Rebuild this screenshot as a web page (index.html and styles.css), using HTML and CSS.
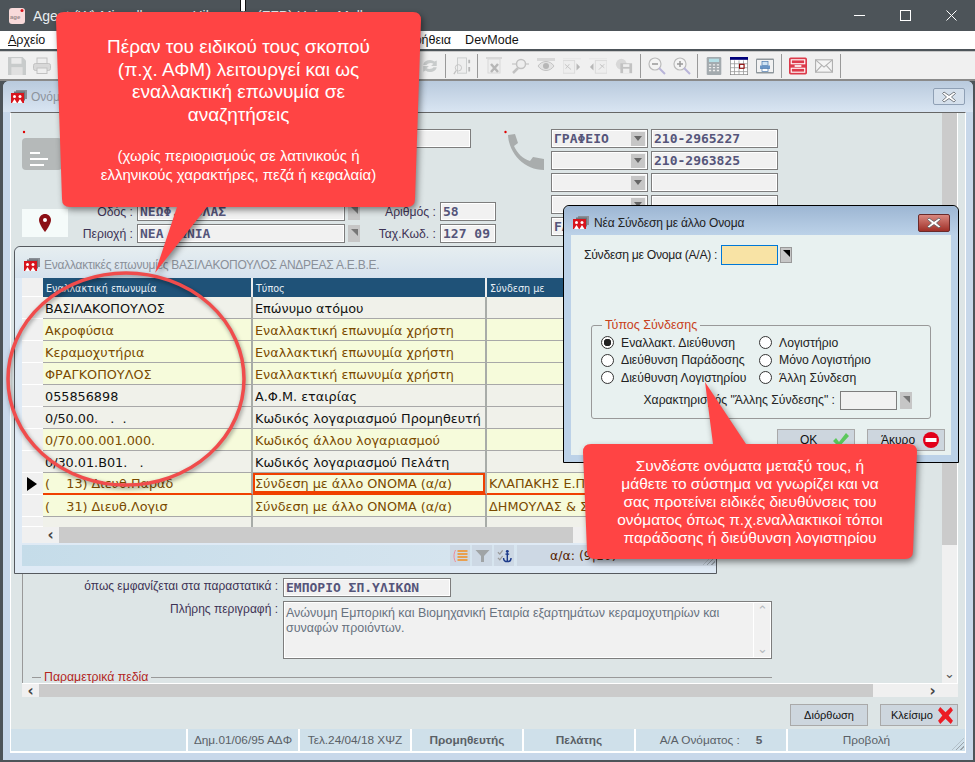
FILE: index.html
```html
<!DOCTYPE html>
<html lang="el">
	<head>
		<meta charset="utf-8">
		<title>Agent</title>
		<link rel="stylesheet" href="styles.css">
	</head>
	<body>
		<svg class="defs" width="0" height="0">
			<symbol id="winicon" viewBox="0 0 16 14">
				<rect x="5" y="0" width="11" height="9" fill="#8a8f96"/>
				<rect x="3" y="1.5" width="11" height="9" fill="#6f747a"/>
				<rect x="0" y="3" width="13" height="10" fill="#d8141c"/>
				<circle cx="3.5" cy="6.5" r="1.5" fill="#fff"/>
				<circle cx="9" cy="6.5" r="1.5" fill="#fff"/>
				<path d="M1 13 3.5 9 6 13zM6.5 13 9 9l2.5 4z" fill="#fff"/>
			</symbol>
			<symbol id="closex" viewBox="0 0 14 12">
				<path d="M2 1 7 4.5 12 1l1.5 1.5L9.5 6l4 3.5L12 11 7 7.500 2 11 .5 9.500l4-3.500-4-3.500z" fill="#fff" stroke="#5a5f66" stroke-width=".8"/>
			</symbol>
		</svg>

		<div class="app">
			<div class="titlebar">
				<svg class="appicon" viewBox="0 0 16 16">
					<rect width="16" height="16" rx="3" fill="#f8dada"/>
					<text x="1" y="11" font-size="6" font-weight="bold" font-family="Liberation Sans" fill="#9a8a8a">age</text>
					<circle cx="13" cy="2.500" r="1.500" fill="#d8141c"/>
				</svg>
				<span class="apptitle">Agent (W) Miscellaneous Hibernate (FFP) Heine Muller</span>
				<div class="winctl">
					<svg viewBox="0 0 11 11" class="ctl-min"><path d="M0 5.500h11" stroke="#fff"/></svg>
					<svg viewBox="0 0 11 11" class="ctl-max"><rect x=".5" y=".5" width="10" height="10" fill="none" stroke="#fff"/></svg>
					<svg viewBox="0 0 11 11" class="ctl-close"><path d="M.5.5l10 10M10.500.5l-10 10" stroke="#fff"/></svg>
				</div>
			</div>
			<div class="menubar">
				<span class="menu"><u>Α</u>ρχείο</span>
				<span class="menu-gap"></span>
				<span class="menu">Βοήθεια</span>
				<span class="menu">DevMode</span>
			</div>
			<div class="toolbar">
				<span class="tb tb25 tb-off"><svg viewBox="0 0 16 16"><path d="M0 0h13l3 3v13H0z" fill="#b4b8b8"/><rect x="3" y="1" width="9" height="5" fill="#e8e8e8"/><rect x="3" y="9" width="10" height="7" fill="#d8d8d8"/></svg></span>
				<span class="tb tb25 tb-off"><svg viewBox="0 0 18 16"><rect x="4" y="0" width="10" height="6" fill="#eee" stroke="#aaa"/><rect x=".5" y="5.500" width="17" height="7" rx="2" fill="#ccc" stroke="#aaa"/><rect x="4" y="10" width="10" height="5.500" fill="#eee" stroke="#aaa"/></svg></span>
				<span class="tb-hidden"></span>
				<span class="tb tb25 tb-off"><svg viewBox="0 0 16 16"><path d="M2 7a6 5 0 0 1 10-3l2-1v5H9l2-2a4 3 0 0 0-6 1zM14 9a6 5 0 0 1-10 3l-2 1V8h5l-2 2a4 3 0 0 0 6-1z" fill="#b4b8b8"/></svg></span>
				<span class="tb-sep"></span>
				<span class="tb tb25 tb-off"><svg viewBox="0 0 20 20"><rect x="5" y="1" width="10" height="17" fill="#eee" stroke="#b4b8b8"/><circle cx="6" cy="12" r="3.500" fill="none" stroke="#aaa"/><path d="M3.500 15 1 19" stroke="#aaa" stroke-width="1.500"/><path d="M18 3v4M18 11v5" stroke="#999" stroke-width="2"/></svg></span>
				<span class="tb-sep"></span>
				<span class="tb tb-off"><svg viewBox="0 0 18 18"><rect x="3" y="2" width="12" height="14" fill="#eee" stroke="#ccc"/><path d="M1 1h16" stroke="#ccc" stroke-width="2"/><path d="M6 7l7 8M13 7l-7 8" stroke="#999" stroke-width="2.500"/></svg></span>
				<span class="tb tb-off"><svg viewBox="0 0 18 18"><circle cx="10" cy="7" r="4.500" fill="#eee" stroke="#aaa" stroke-width="1.500"/><path d="M7 11l-5 5" stroke="#aaa" stroke-width="2.500"/><path d="M1 7h4M15 7h3" stroke="#bbb" stroke-width="1.500"/></svg></span>
				<span class="tb tb-off"><svg viewBox="0 0 18 18"><path d="M0 1h18v3H0z" fill="#ccc"/><path d="M1 9c4-6 12-6 16 0-4 6-12 6-16 0z" fill="#ddd" stroke="#aaa"/><circle cx="9" cy="9" r="3" fill="#999"/></svg></span>
				<span class="tb tb-off"><svg viewBox="0 0 20 18"><rect x="0" y="3" width="13" height="14" fill="#eee" stroke="#ccc"/><path d="M2 7l7 6M3 12l4-5" stroke="#aaa"/><path d="M15 6l4 4-4 4z" fill="#999"/><path d="M0 1h20" stroke="#ddd"/></svg></span>
				<span class="tb tb-off"><svg viewBox="0 0 20 18"><rect x="7" y="3" width="13" height="14" fill="#eee" stroke="#ccc"/><path d="M11 13l6-6M12 7l5 4" stroke="#aaa"/><path d="M5 6l-4 4 4 4z" fill="#999"/><path d="M0 1h20" stroke="#ddd"/></svg></span>
				<span class="tb tb-off"><svg viewBox="0 0 20 18"><circle cx="7" cy="7" r="6" fill="#ccc"/><rect x="6" y="6" width="13" height="11" fill="#aaa"/><rect x="9" y="7" width="7" height="3" fill="#eee"/><rect x="9" y="12" width="7" height="5" fill="#eee"/></svg></span>
				<span class="tb-sep"></span>
				<span class="tb tb25"><svg viewBox="0 0 18 18"><circle cx="7" cy="7" r="6" fill="#f4f4f4" stroke="#bbb" stroke-width="1.200"/><path d="M4 7h6" stroke="#999" stroke-width="1.500"/><path d="M11 11l6 6" stroke="#b8b4d8" stroke-width="2"/></svg></span>
				<span class="tb tb25"><svg viewBox="0 0 18 18"><circle cx="7" cy="7" r="6" fill="#f4f4f4" stroke="#bbb" stroke-width="1.200"/><path d="M4 7h6M7 4v6" stroke="#999" stroke-width="1.500"/><path d="M11 11l6 6" stroke="#b8b4d8" stroke-width="2"/></svg></span>
				<span class="tb-sep"></span>
				<span class="tb tb25"><svg viewBox="0 0 13 16"><rect width="13" height="16" rx="1" fill="#a3aaae"/><rect x="2" y="1.500" width="9" height="3" fill="#b4dfe6"/><path d="M2 7h2M5.500 7h2M9 7h2M2 9.500h2M5.500 9.500h2M9 9.500h2M2 12h2M5.500 12h2M9 12h2" stroke="#eee" stroke-width="1.200"/></svg></span>
				<span class="tb"><svg viewBox="0 0 16 16"><rect width="16" height="16" fill="#fff" stroke="#666"/><rect width="16" height="2.500" fill="#00007a"/><path d="M0 6h16M0 9.500h16M0 13h16M4 3v13M8 3v13M12 3v13" stroke="#999" stroke-width=".7"/><rect x="8.500" y="6.500" width="4" height="3.500" fill="#fff" stroke="#8a0000"/></svg></span>
				<span class="tb"><svg viewBox="0 0 18 15"><rect width="18" height="15" rx="1" fill="#8f979c"/><rect x="1" y="1.500" width="16" height="12" fill="#f2f2f2"/><rect x="6" y="3" width="6" height="4" fill="#cfe3f4" stroke="#4a78ad" stroke-width=".7"/><rect x="4" y="7" width="10" height="3.500" fill="#6a95c6"/><rect x="6" y="10" width="6" height="3" fill="#fff" stroke="#4a78ad" stroke-width=".7"/></svg></span>
				<span class="tb-sep"></span>
				<span class="tb"><svg viewBox="0 0 16 15"><rect width="16" height="15" rx="1.500" fill="#dc3a4a"/><rect x="2" y="2" width="12" height="3.500" fill="none" stroke="#fff"/><rect x="2" y="9.500" width="12" height="3.500" fill="none" stroke="#fff"/><path d="M5 7.500h6" stroke="#fff" stroke-width="1.500"/></svg></span>
				<span class="tb"><svg viewBox="0 0 16 12"><rect x=".5" y=".5" width="15" height="11" fill="#f4f4f4" stroke="#b0b0b0"/><path d="M.5.500 8 7l7.500-6.500M.5 11.500 6 5.500M15.500 11.500 10 5.500" fill="none" stroke="#b0b0b0"/></svg></span>
				<span class="tb-sep"></span>
			</div>

			<div class="mdi">
				<div class="child">
					<div class="child-title">
						<svg class="winicon"><use href="#winicon"/></svg>
						<span>Ονόματα</span>
						<span class="child-close"><svg><use href="#closex"/></svg></span>
					</div>
					<div class="child-body">
						<div class="pane">
							<div class="pane-main">
								<div class="form">
									<div class="form-top">
										<div class="form-left">
											<div class="name-row">
												<svg class="card" viewBox="0 0 40 42">
													<circle cx="2" cy="3" r="1.200" fill="#e00000"/>
													<rect y="9" width="40" height="32" rx="4" fill="#b5b9b9"/>
													<path d="M8 24h10M8 30h18M8 36h14" stroke="#fff" stroke-width="2"/>
												</svg>
												<div class="field name-field"></div>
											</div>
											<div class="addr">
												<div class="pin">
													<svg viewBox="0 0 12 18"><path d="M6 0C2.700 0 0 2.700 0 6c0 4.500 6 12 6 12s6-7.500 6-12C12 2.700 9.300 0 6 0z" fill="#8b0f15"/><circle cx="6" cy="6" r="2" fill="#fff"/></svg>
												</div>
												<span class="lbl">Οδός :</span>
												<div class="field">ΝΕΩΦ. ΔΟΛΑΣ</div>
												<span class="corner-btn"></span>
												<span class="lbl">Αριθμός :</span>
												<div class="field">58</div>
												<span class="lbl">Περιοχή :</span>
												<div class="field">ΝΕΑ ΙΩΝΙΑ</div>
												<span class="corner-btn"></span>
												<span class="lbl">Ταχ.Κωδ. :</span>
												<div class="field">127 09</div>
											</div>
										</div>
										<div class="phones">
											<svg class="phone" viewBox="0 0 40 43">
												<circle cx="1.500" cy="3" r="1.200" fill="#e00000"/>
												<path d="M4 6 11 5l3 9-4 3c3 7 9 13 16 15l3-4 11 2v11C21 41 5 25 4 6z" fill="#a9adad"/>
											</svg>
											<div class="field combo">ΓΡΑΦΕΙΟ<span class="drop"></span></div>
											<div class="field">210-2965227</div>
											<div class="field combo"><span class="drop"></span></div>
											<div class="field">210-2963825</div>
											<div class="field combo"><span class="drop"></span></div>
											<div class="field"></div>
											<div class="field combo"><span class="drop"></span></div>
											<div class="field"></div>
											<div class="field combo">FAX<span class="drop"></span></div>
											<div class="field"></div>
										</div>
									</div>
									<div class="form-bottom">
										<div class="desc-row">
											<span class="desc-lbl">όπως εμφανίζεται στα παραστατικά :</span>
											<div class="field doc-field">ΕΜΠΟΡΙΟ ΣΠ.ΥΛΙΚΩΝ</div>
										</div>
										<div class="desc-row">
											<span class="desc-lbl">Πλήρης περιγραφή :</span>
											<div class="memo">
												<p>Ανώνυμη Εμπορική και Βιομηχανική Εταιρία εξαρτημάτων κεραμοχυτηρίων και συναφών προιόντων.</p>
												<div class="memo-bar"><span>⌃</span><span>⌄</span></div>
											</div>
										</div>
										<div class="param"><i></i><span>Παραμετρικά πεδία</span><b></b></div>
									</div>
								</div>
								<div class="vscroll"><div class="vthumb"></div><span>⌄</span></div>
							</div>
							<div class="hscroll">
								<span class="arrow">‹</span>
								<div class="hthumb"></div>
								<span class="arrow arrow-right">›</span>
							</div>
						</div>
						<div class="actions">
							<button class="btn">Διόρθωση</button>
							<button class="btn btn-icon">Κλείσιμο
								<svg viewBox="0 0 14 16"><path d="M2 0l5 5 5-5 2 3-4 5 4 5-2 3-5-5-5 5-2-3 4-5-4-5z" fill="#ec1c24"/></svg>
							</button>
						</div>
						<div class="status">
							<span class="st st1"></span>
							<span class="st">Δημ.01/06/95 ΑΔΦ</span>
							<span class="st">Τελ.24/04/18 ΧΨΖ</span>
							<span class="st st-b">Προμηθευτής</span>
							<span class="st st-b">Πελάτης</span>
							<span class="st st5">Α/Α Ονόματος :<b>5</b></span>
							<span class="st st6">Προβολή<i class="grip"></i></span>
						</div>
					</div>
				</div>

				<div class="gridwin">
					<div class="gridwin-title">
						<svg class="winicon"><use href="#winicon"/></svg>
						<span>Εναλλακτικές επωνυμίες ΒΑΣΙΛΑΚΟΠΟΥΛΟΣ ΑΝΔΡΕΑΣ Α.Ε.Β.Ε.</span>
					</div>
					<table class="grid">
						<colgroup><col class="c0"><col class="c1"><col class="c2"><col class="c3"></colgroup>
						<tr class="head"><td class="ind"></td><td>Εναλλακτική επωνυμία</td><td>Τύπος</td><td>Σύνδεση με</td></tr>
						<tr><td class="ind"></td><td>ΒΑΣΙΛΑΚΟΠΟΥΛΟΣ</td><td>Επώνυμο ατόμου</td><td></td></tr>
						<tr class="user"><td class="ind"></td><td>Ακροφύσια</td><td>Εναλλακτική επωνυμία χρήστη</td><td></td></tr>
						<tr class="user"><td class="ind"></td><td>Κεραμοχυτήρια</td><td>Εναλλακτική επωνυμία χρήστη</td><td></td></tr>
						<tr class="user"><td class="ind"></td><td>ΦΡΑΓΚΟΠΟΥΛΟΣ</td><td>Εναλλακτική επωνυμία χρήστη</td><td></td></tr>
						<tr><td class="ind"></td><td>055856898</td><td>Α.Φ.Μ. εταιρίας</td><td></td></tr>
						<tr><td class="ind"></td><td>0/50.00. &nbsp; . &nbsp;.</td><td>Κωδικός λογαριασμού Προμηθευτή</td><td></td></tr>
						<tr class="user"><td class="ind"></td><td>0/70.00.001.000.</td><td>Κωδικός άλλου λογαριασμού</td><td></td></tr>
						<tr><td class="ind"></td><td>0/30.01.B01. &nbsp; .</td><td>Κωδικός λογαριασμού Πελάτη</td><td></td></tr>
						<tr class="user current"><td class="ind"><i class="marker"></i></td><td>( &nbsp; &nbsp;13) Διευθ.Παραδ</td><td class="cell-on">Σύνδεση με άλλο ΟΝΟΜΑ (α/α)</td><td>ΚΛΑΠΑΚΗΣ Ε.Π.Ε.</td></tr>
						<tr class="user"><td class="ind"></td><td>( &nbsp; &nbsp;31) Διευθ.Λογισ</td><td>Σύνδεση με άλλο ΟΝΟΜΑ (α/α)</td><td>ΔΗΜΟΥΛΑΣ &amp; ΣΙΑ</td></tr>
						<tr class="last"><td class="ind"></td><td></td><td></td><td></td></tr>
					</table>
					<div class="grid-hscroll">
						<span class="arrow">‹</span>
						<div class="grid-hthumb"></div>
					</div>
					<div class="grid-foot">
						<span class="gbtn"><svg viewBox="0 0 14 14"><path d="M2 1C0 5 0 9 2 13" fill="none" stroke="#f08a9a"/><path d="M4 2h10M4 5h10M4 8h10M4 11h10" stroke="#e8a050" stroke-width="2"/></svg></span>
						<span class="gbtn"><svg viewBox="0 0 14 14"><path d="M0 1h14L8.500 7v6h-3V7z" fill="#a0a4a6"/></svg></span>
						<span class="gbtn"><svg viewBox="0 0 16 14"><path d="M1 3l2 2 3-4M1 9l2 2 3-4" fill="none" stroke="#999" stroke-width="1.300"/><circle cx="11" cy="2" r="1.500" fill="#1c3a8a"/><path d="M11 3v10M7 9c0 3 2 4 4 4s4-1 4-4M9 5h4" fill="none" stroke="#1c3a8a" stroke-width="1.500"/></svg></span>
						<div class="recno">α/α: (9|10)<i class="grip"></i></div>
					</div>
				</div>

				<div class="dialog">
					<div class="dialog-title">
						<svg class="winicon"><use href="#winicon"/></svg>
						<span>Νέα Σύνδεση με άλλο Ονομα</span>
						<span class="dialog-close"><svg><use href="#closex"/></svg></span>
					</div>
					<div class="dialog-body">
						<div class="link-row">
							<span>Σύνδεση με Ονομα (Α/Α) :</span>
							<div class="link-input"></div>
							<span class="link-btn"></span>
						</div>
						<fieldset class="types">
							<legend>Τύπος Σύνδεσης</legend>
							<div class="radios">
								<label class="radio"><i class="dot on"></i>Εναλλακτ. Διεύθυνση</label>
								<label class="radio"><i class="dot"></i>Λογιστήριο</label>
								<label class="radio"><i class="dot"></i>Διεύθυνση Παράδοσης</label>
								<label class="radio"><i class="dot"></i>Μόνο Λογιστήριο</label>
								<label class="radio"><i class="dot"></i>Διεύθυνση Λογιστηρίου</label>
								<label class="radio"><i class="dot"></i>Άλλη Σύνδεση</label>
							</div>
							<div class="kind-row">
								<span>Χαρακτηρισμός "Άλλης Σύνδεσης" :</span>
								<div class="kind-input"></div>
								<span class="corner-btn"></span>
							</div>
						</fieldset>
						<div class="dialog-actions">
							<button class="btn btn-dlg">ΟΚ
								<svg viewBox="0 0 16 14"><path d="M0 8l3-3 3 4 7-9 3 3-10 11z" fill="#5cc85c"/></svg>
							</button>
							<button class="btn btn-dlg btn-cancel">Άκυρο
								<svg viewBox="0 0 16 16"><circle cx="8" cy="8" r="8" fill="#e2001a"/><rect x="2.500" y="6" width="11" height="4" fill="#fff"/></svg>
							</button>
						</div>
					</div>
				</div>
			</div>
		</div>

		<i class="cursor"></i>

		<svg class="ring" viewBox="0 0 975 762"><ellipse cx="126" cy="379" rx="118" ry="106"/></svg>

		<div class="callout callout-a">
			<svg viewBox="56 12 365 262"><path d="M64 12H413Q421 12 421 20L415 199Q415 207 407 207H207L155 273 177 207H70Q62 207 62 199L56 20Q56 12 64 12Z"/></svg>
			<p class="big">Πέραν του ειδικού τους σκοπού<br>(π.χ. ΑΦΜ) λειτουργεί και ως<br>εναλλακτική επωνυμία σε<br>αναζητήσεις</p>
			<p class="small">(χωρίς περιορισμούς σε λατινικούς ή<br>ελληνικούς χαρακτήρες, πεζά ή κεφαλαία)</p>
		</div>

		<div class="callout callout-b">
			<svg viewBox="583 382 334 178"><path d="M591 444H713L705 382 746 444H909Q917 444 917 452L913 551Q913 559 905 559H595Q587 559 587 551L583 452Q583 444 591 444Z"/></svg>
			<p>Συνδέστε ονόματα μεταξύ τους, ή μάθετε το σύστημα να γνωρίζει και να σας προτείνει ειδικές διευθύνσεις του ονόματος όπως π.χ.εναλλακτικοί τόποι παράδοσης ή διεύθυνση λογιστηρίου</p>
		</div>
	</body>
</html>
```

FILE: styles.css
```css
* { box-sizing:border-box; }
html, body { margin:0; height:100%; overflow:hidden; }
body { background:#4d5459; font:12.5px "Liberation Sans", Arial, sans-serif; color:#3d3355; position:relative; }
.defs { position:absolute; }
svg { display:block; }

/* main window */
.app { display:flex; flex-direction:column; height:762px; }
.titlebar { height:31px; background:#4d5459; display:flex; align-items:center; padding-left:9px; color:#e8edf0; font-size:14px; }
.appicon { width:16px; height:16px; margin-right:8px; }
.winctl { margin-left:auto; display:flex; }
.winctl svg { width:11px; height:11px; }
.ctl-min { margin-right:35px; }
.ctl-max { margin-right:35px; }
.ctl-close { margin-right:18px; }
.menubar { height:18px; background:#fff; display:flex; align-items:center; padding-left:8px; color:#111; font-size:12.5px; flex:none; }
.menu-gap { width:347px; }
.menu { margin-right:14px; }
.toolbar { height:30px; margin-top:2px; background:#f0f0f0; border-top:1px solid #c8c8c8; border-bottom:2px solid #8a8a8a; display:flex; align-items:center; padding-left:4px; flex:none; }
.tb { width:26px; height:100%; display:flex; align-items:center; justify-content:center; }
.tb25 { width:25px; }
.tb-off { opacity:.65; }
.tb svg { width:18px; height:18px; }
.tb-hidden { width:363px; }
.tb-sep { width:1px; height:24px; margin:0 3px; background:#999; }
.mdi { position:relative; flex:1; }

/* names window */
.child { position:absolute; left:3px; top:0; width:970px; height:679px; background:#c8d8ea; border-radius:6px 6px 0 0; }
.child-title { height:31px; display:flex; align-items:center; padding:0 8px; color:#8c939c; font-size:12px; background:linear-gradient(#b9cadd, #d9e5f2); border-radius:6px 6px 0 0; }
.winicon { width:16px; height:14px; margin-right:4px; flex:none; }
.child-close { margin-left:auto; width:32px; height:17px; border:1px solid #8fa0b5; border-radius:2px; background:#d5e0ec; display:flex; align-items:center; justify-content:center; }
.child-close svg { width:14px; height:12px; }
.child-body { margin:0 7px; width:956px; height:641px; background:#dde5e6; border-top:1px solid #666; border-left:1px solid #fff; border-right:1px solid #fff; border-bottom:2px solid #fff; }
.pane { margin-left:11px; width:936px; height:584px; display:flex; flex-direction:column; }
.pane-main { height:570px; display:flex; }
.form { flex:1; }
.form-top { display:flex; gap:8px; height:114px; margin-top:16px; }
.form-left { width:474px; }
.name-row { display:flex; height:73px; }
.card { width:40px; height:42px; margin-right:75px; }
.name-field { width:334px; }
.addr { display:grid; grid-template-columns:46px 69px 208px 15px 80px 56px; grid-template-rows:19px 19px; row-gap:3px; align-items:center; }
.pin { grid-row:span 2; height:28px; background:#f5fbfa; display:flex; align-items:center; justify-content:center; }
.pin svg { width:12px; height:18px; }
.lbl { text-align:right; padding-right:4px; font-size:12.2px; }
.field { height:19px; background:#f1f1f1; border:1px solid #7d7d7d; box-shadow:inset 0 0 0 1px #fff; font:bold 13px/17px "DejaVu Sans Mono", monospace; color:#55557a; padding-left:2px; white-space:nowrap; overflow:hidden; }
.combo { display:flex; justify-content:space-between; align-items:center; }
.drop { width:14px; height:14px; margin-right:2px; background:#c6c6c6; display:flex; align-items:center; justify-content:center; margin-left:auto; }
.drop:after { content:""; border:4px solid transparent; border-top:5px solid #666; border-bottom:0; }
.corner-btn { display:block; width:12px; height:17px; margin-left:3px; background:#c6c6c6; position:relative; }
.corner-btn:after { content:""; position:absolute; right:2px; top:4px; border-top:7px solid #777; border-left:7px solid transparent; }
.phones { display:grid; grid-template-columns:47px 97px 130px; grid-auto-rows:19px; row-gap:3px; }
.phone { grid-row:span 5; width:40px; height:43px; }
.phones .combo { width:97px; }
.phones .field:nth-child(odd) { width:127px; margin-left:3px; }
.form-bottom { margin-top:20px; padding-top:315px; height:420px; border-left:1px solid #999; }
.desc-row { display:flex; gap:5px; margin-bottom:4px; }
.desc-lbl { width:255px; text-align:right; font-size:12px; line-height:17px; flex:none; }
.doc-field { width:168px; }
.memo { width:489px; height:58px; background:#f1f1f1; border:1px solid #7d7d7d; box-shadow:inset 0 0 0 1px #fff; display:flex; color:#68727f; font-size:12.5px; line-height:15px; }
.memo p { margin:4px 0 0 2px; flex:1; }
.memo-bar { width:18px; border-left:1px solid #fff; display:flex; flex-direction:column; justify-content:space-between; align-items:center; color:#b5b9bd; padding:4px 0; line-height:10px; }
.param { display:flex; align-items:center; width:740px; margin:11px 0 0 9px; color:#b3261e; font-size:12.3px; gap:3px; }
.param i { width:9px; height:1px; background:#999; }
.param b { flex:1; height:1px; background:#999; }
.vscroll { width:16px; background:#f0f0f0; border-right:1px solid #fff; position:relative; color:#555; text-align:center; }
.vthumb { height:432px; background:#cbcbcb; }
.vscroll span { position:absolute; left:0; right:0; bottom:4px; line-height:10px; }
.hscroll { height:14px; background:#f0f0f0; display:flex; align-items:center; border-top:1px solid #fff; }
.arrow { width:17px; text-align:center; font:bold 15px/12px "DejaVu Sans", sans-serif; color:#444; flex:none; }
.hthumb { width:834px; height:100%; background:#cbcbcb; }
.arrow-right { margin-left:51px; }
.actions { height:32px; padding:7px 7px 0 0; display:flex; justify-content:flex-end; gap:12px; }
.btn { width:78px; height:22px; padding:0; background:#cdd6de; border:1px solid #a9a9a9; font:11px "Liberation Sans", sans-serif; color:#111; display:flex; align-items:center; justify-content:center; }
.btn-icon { justify-content:space-between; padding:0 4px 0 10px; }
.btn-icon svg { width:15px; height:17px; }
.status { height:22px; display:flex; background:#cfe0ea; color:#5a5f66; font-size:11.8px; }
.st { width:112px; border-left:2px solid #fff; display:flex; align-items:center; justify-content:center; white-space:nowrap; }
.st1 { width:175px; border-left:0; }
.st-b { font-weight:bold; }
.st5 { width:152px; }
.st5 b { margin-left:16px; }
.st6 { flex:1; position:relative; padding-right:20px; }
.grip { position:absolute; right:1px; bottom:1px; width:12px; height:12px; background:repeating-linear-gradient(135deg, transparent 0 2px, #9aa3aa 2px 3px); clip-path:polygon(100% 0, 100% 100%, 0 100%); }

/* alternative names window */
.gridwin { position:absolute; left:14px; top:165px; width:703px; height:328px; background:#dfeaf5; border:1px solid #55595e; border-radius:6px 0 0 0; padding:0 8px 0 7px; }
.gridwin-title { height:31px; margin:0 -8px 0 -7px; padding:4px 0 0 9px; display:flex; align-items:center; gap:0; color:#8a9099; font-size:12px; letter-spacing:-.25px; background:linear-gradient(#e6eef0, #d6e2ee); border-radius:6px 0 0 0; }
.grid { border-collapse:separate; border-spacing:0; table-layout:fixed; width:686px; font:12.8px "DejaVu Sans", sans-serif; color:#111; background:#fff; }
.c0 { width:21px; }
.c1 { width:210px; }
.c2 { width:234px; }
.grid td { height:22px; padding:1px 2px 0; background:#f0f1ea; border-bottom:1px solid #a8a8a8; border-right:2px solid #a8aca8; white-space:nowrap; overflow:hidden; }
.grid .ind { background:#f0f0f0; border-right:0; border-bottom:1px solid #fff; padding:0; }
.head td { height:19px; background:#1f5278; color:#e6eef5; font-size:9.6px; border-right:2px solid #eee; border-bottom:0; padding-left:3px; }
.user td { background:#f6fbdb; color:#7a4a00; }
.current td { border-bottom:2px solid #f04000; }
.grid .cell-on { box-shadow:inset 0 0 0 2px #f04000; }
.marker { display:block; margin-left:5px; border-left:10px solid #000; border-top:7px solid transparent; border-bottom:7px solid transparent; width:0; }
.last td { height:10px; border-bottom:0; }
.grid-hscroll { height:16px; margin-bottom:2px; background:#f0f0f0; display:flex; align-items:center; }
.grid-hscroll .arrow { margin-left:20px; }
.grid-hthumb { width:514px; height:100%; background:#cbcbcb; }
.grid-foot { height:21px; margin-right:-8px; display:flex; justify-content:flex-end; gap:2px; background:linear-gradient(90deg, #c5dce9, #dfe9f2); }
.gbtn { width:20px; display:flex; align-items:center; justify-content:center; background:#cdd8e4; }
.gbtn svg { width:15px; height:14px; }
.recno { width:199px; margin-left:1px; background:#cdd8e4; color:#552200; font:12.5px "DejaVu Sans", sans-serif; padding:3px 0 0 33px; position:relative; }

/* link dialog */
.dialog { position:absolute; left:563px; top:124px; width:396px; height:258px; border:1px solid #000; border-radius:6px 6px 0 0; background:#bcd2e8; }
.dialog-title { height:29px; padding:5px 8px 0 9px; display:flex; align-items:center; gap:1px; color:#222; font-size:12px; letter-spacing:-.15px; background:linear-gradient(#9db6d3, #bcd2e8); border-radius:6px 6px 0 0; }
.dialog-close { margin-left:auto; width:32px; height:18px; border:1px solid #6a2a2a; border-radius:2px; background:linear-gradient(#d98880, #a03028); display:flex; align-items:center; justify-content:center; }
.dialog-close svg { width:14px; height:12px; }
.dialog-body { margin:0 7px; height:220px; background:#e8f1f0; padding:10px 0 0 13px; font-size:12.2px; color:#222; }
.link-row { display:flex; align-items:center; height:20px; }
.link-row span:first-child { letter-spacing:-.3px; }
.link-input { width:57px; height:20px; margin-left:4px; background:#f8e3a5; border:1px solid #0078d7; }
.link-btn { width:12px; height:16px; margin-left:2px; background:#c6c6c6; border:1px solid #999; position:relative; }
.link-btn:after { content:""; position:absolute; right:1px; top:2px; border-top:7px solid #000; border-left:7px solid transparent; }
.types { margin:53px 0 0 7px; width:340px; height:101px; border:1px solid #999; border-radius:3px; padding:0 0 0 9px; }
.types legend { margin-left:1px; padding:0 3px; color:#c8401a; font-size:12.5px; }
.radios { display:grid; grid-template-columns:158px 1fr; grid-auto-rows:17.5px; margin-top:2px; }
.radio { display:flex; align-items:center; gap:7px; white-space:nowrap; }
.dot { width:13px; height:13px; border:1.500px solid #333; border-radius:50%; background:#fff; flex:none; }
.dot.on { background:radial-gradient(circle, #222 0 3.500px, #fff 4px); }
.kind-row { display:flex; align-items:center; justify-content:flex-end; height:19px; margin:4px 18px 0 0; }
.kind-input { width:57px; height:19px; margin-left:5px; background:#f1f1f1; border:1px solid #7d7d7d; }
.dialog-actions { display:flex; justify-content:flex-end; gap:12px; margin:10px 6px 0 0; }
.btn-dlg { justify-content:space-between; padding:0 5px 0 22px; font-size:12px; }
.btn-cancel { padding-left:13px; }
.btn-dlg svg { width:16px; height:16px; }

/* annotations over the screenshot */
.cursor { position:absolute; left:240px; top:0; width:6px; height:11px; background:#fff; border:solid #111; border-width:0 1px; }
.ring { position:absolute; left:0; top:0; width:975px; height:762px; pointer-events:none; filter:drop-shadow(1px 2px 2px rgba(0,0,0,.4)); }
.ring ellipse { fill:none; stroke:#f04c4c; stroke-width:3.500px; }
.callout { position:absolute; color:#fff; text-align:center; font-family:"Liberation Sans", Arial, sans-serif; }
.callout svg { position:absolute; left:0; top:0; width:100%; height:100%; overflow:visible; filter:drop-shadow(2px 3px 3px rgba(0,0,0,.45)); }
.callout path { fill:#ff4444; }
.callout p { position:relative; margin:0; }
.callout-a { left:56px; top:12px; width:365px; height:262px; padding:24px 30px 0; }
.callout-a .big { font-size:19px; line-height:22.500px; }
.callout-a .small { font-size:15px; line-height:19px; margin:20px -8px 0; white-space:nowrap; }
.callout-b { left:583px; top:382px; width:334px; height:178px; padding:75px 30px 0; font-size:15.500px; line-height:18px; }
```
